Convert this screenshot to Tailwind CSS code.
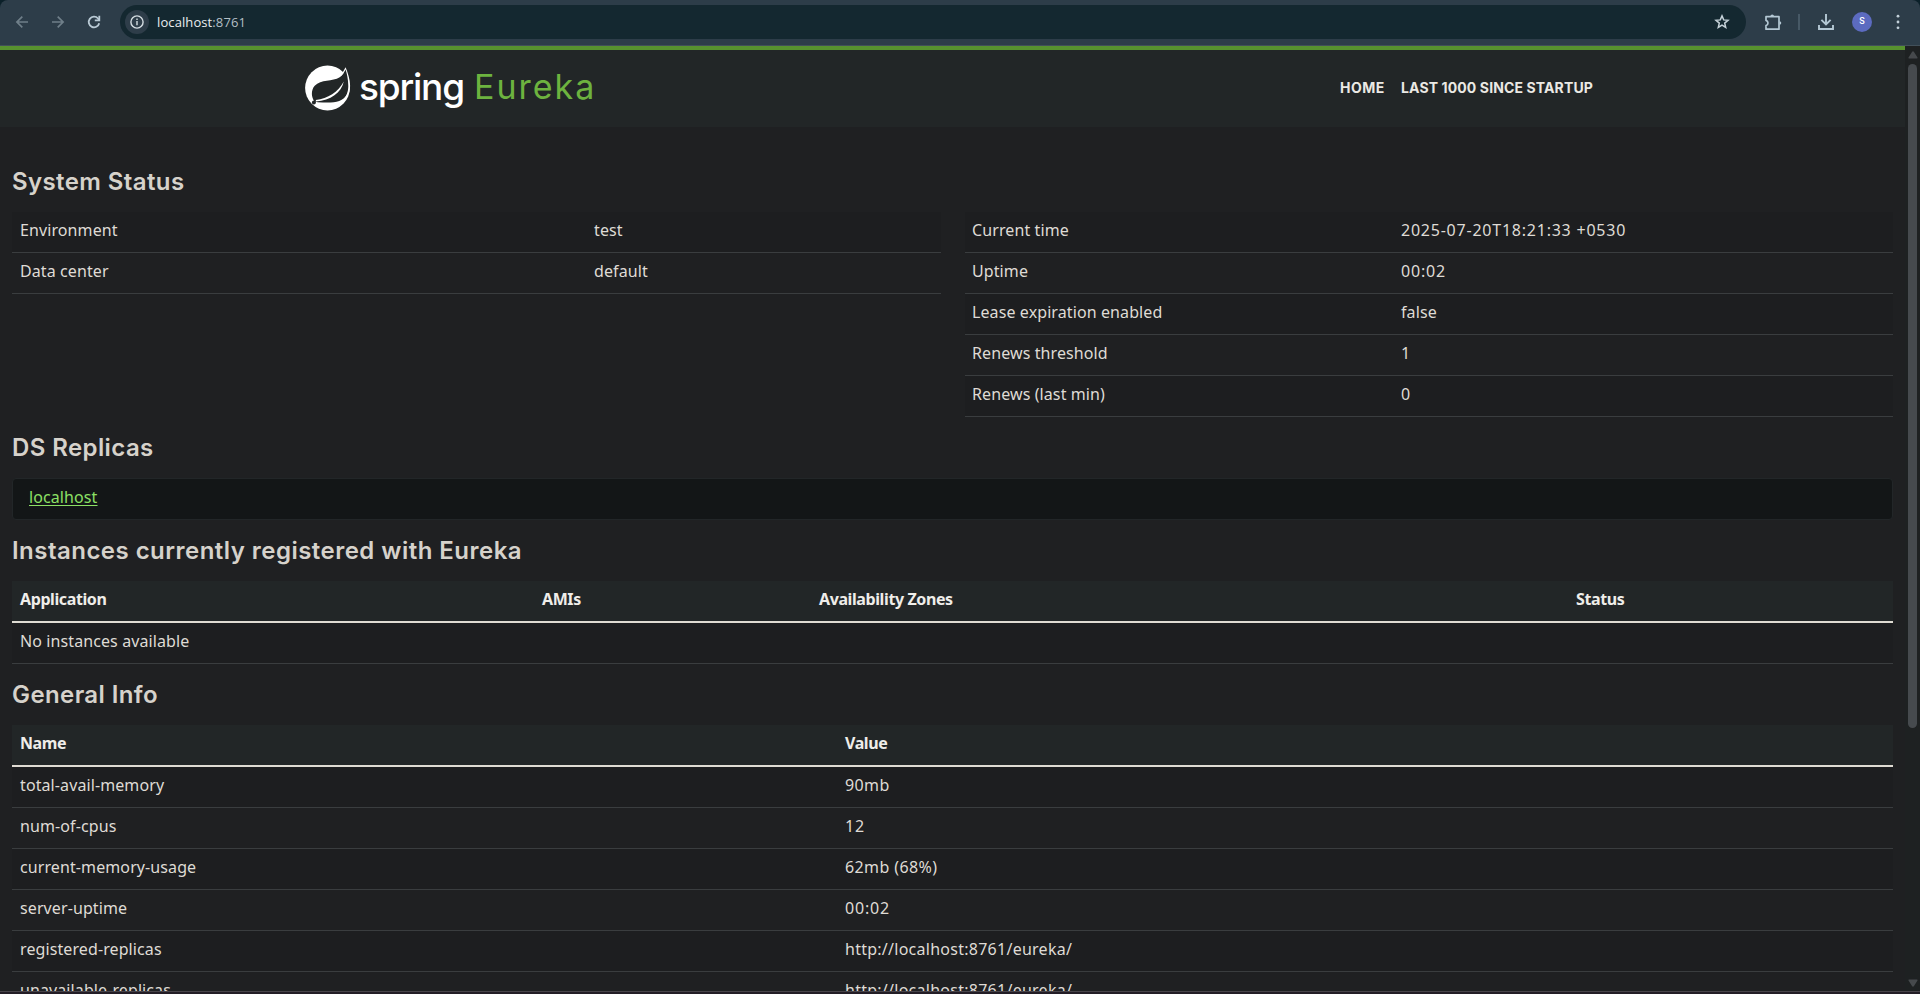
<!DOCTYPE html>
<html lang="en">
<head>
<meta charset="utf-8">
<title>Eureka</title>
<script src="https://cdn.jsdelivr.net/npm/@tailwindcss/browser@4"></script>
</head>
<body class="bg-[#0b2029]">
<div class="flex h-[994px] w-[1920px] flex-col overflow-hidden">

  <!-- Browser toolbar -->
  <header class="flex h-[46px] shrink-0 items-start rounded-t-[8px] border-b border-[#42505a] bg-[#2d3d49] pt-[5px]">
    <div class="ml-[14px] flex h-[34px] items-center gap-[19px]">
      <svg class="h-4 w-4" viewBox="0 0 16 16" fill="none" stroke="#6f7f89" stroke-width="1.7"><path d="M14 8H3M8.3 2.6L2.9 8l5.4 5.4"/></svg>
      <svg class="ml-[1px] h-4 w-4" viewBox="0 0 16 16" fill="none" stroke="#6f7f89" stroke-width="1.7"><path d="M2 8h11M7.7 2.6L13.1 8l-5.4 5.4"/></svg>
      <svg class="ml-[1px] h-4 w-4" viewBox="0 0 16 16" fill="none" stroke="#b9cad5" stroke-width="1.8"><path d="M13.2 9.2A5.3 5.3 0 1 1 12 4.5l1.3 1.5"/><path d="M13.3 1.8v4.5H8.8"/></svg>
    </div>
    <div class="ml-[18px] flex h-[34px] w-[1626px] items-center rounded-full bg-[#142830] pl-[5px] pr-[16px]">
      <div class="flex h-6 w-6 items-center justify-center rounded-full bg-[#2e3d49]">
        <svg class="h-[14px] w-[14px]" viewBox="0 0 14 14" fill="none" stroke="#d5dde2" stroke-width="1.4"><circle cx="7" cy="7" r="6.1"/><path d="M7 6.1v4.2M7 3.6v1.5"/></svg>
      </div>
      <div class="ml-[8px] grow font-['Open_Sans',sans-serif] text-[13px] leading-5 tracking-[0.1px] text-[#e9edef]">localhost<span class="text-[#b3bfc5]">:8761</span></div>
      <svg class="h-4 w-4" viewBox="0 0 16 16" fill="none" stroke="#c6d2d9" stroke-width="1.5" stroke-linejoin="miter"><path d="M8 1.9l1.7 4 4.3.4-3.3 2.8 1 4.3L8 11.1l-3.7 2.3 1-4.3L2 6.3l4.3-.4z"/></svg>
    </div>
    <div class="flex h-[34px] items-center">
      <svg class="ml-[18px] h-[18px] w-[18px]" viewBox="0 0 18 18" fill="none" stroke="#b4c8d4" stroke-width="1.7" stroke-linejoin="round"><path d="M2 3.7h13v12.5H2v-3.6a2.7 2.7 0 0 0 0-5.2z"/><path d="M6.4 3.2a1.8 1.8 0 0 1 3.6 0zM15.5 8.2a1.8 1.8 0 0 1 0 3.6z" fill="#b4c8d4" stroke="none"/></svg>
      <div class="ml-[16px] h-4 w-[2px] bg-[#475966]"></div>
      <svg class="ml-[18px] h-4 w-4" viewBox="0 0 16 16" fill="none" stroke="#b4c8d4" stroke-width="1.9"><path d="M8 0v10M3.4 5.8L8 10.4l4.6-4.6M1 11v4h14v-4"/></svg>
      <div class="ml-[18px] flex h-5 w-5 items-center justify-center rounded-full bg-[#5c6bc0] font-['Roboto',sans-serif] text-[9px] font-medium text-white">S</div>
      <svg class="ml-[18px] h-4 w-4" viewBox="0 0 16 16" fill="#c2d0d9"><circle cx="8" cy="2.2" r="1.4"/><circle cx="8" cy="8" r="1.4"/><circle cx="8" cy="13.8" r="1.4"/></svg>
    </div>
  </header>

  <div class="flex h-[945px] shrink-0 overflow-hidden">
    <!-- Page -->
    <div class="w-[1905px] bg-[#1f2022] font-['Noto_Sans',sans-serif] text-[16px] leading-6 tracking-[0.1px] text-[#dfdbd5]">
      <nav class="flex h-[81px] border-t-4 border-[#57922f] bg-[#222627] pl-[305px] font-['Inter',sans-serif]">
        <svg class="mt-[15px] h-[46px] w-[46px]" viewBox="0 0 46 46">
          <circle cx="22.5" cy="23" r="22.4" fill="#fff"/>
          <path d="M41.3 3.2C39.6 7.3 37.5 10.3 34.7 12.2C27.5 16.8 16 13.8 9.7 20.8C5.6 25.5 6.4 32.6 9.6 36.6L12.8 37.3C26 37.6 37 39 42.5 28.5C45.8 21 43.3 12 41.3 3.2Z" fill="#222627"/>
          <path d="M40.6 2.2C43.8 10 46.6 19.5 44.2 27C42.4 32 39.7 36 36 39.6C40.8 33 43.4 27.5 43.3 21C43.2 14 41.8 8.5 40.6 4.6C40 6 38 9.6 35 12Z" fill="#fff"/>
          <path d="M38.8 16.6C36.4 27.6 25.5 35.8 11 36.4L10.8 35C23 33.6 33 27.5 38.8 16.6Z" fill="#fff"/>
          <circle cx="8.9" cy="37.6" r="2" fill="#222627"/>
        </svg>
        <div class="ml-[8px] mt-[14px] w-[117px] text-[37px] font-medium leading-[46px] tracking-[-1.2px] text-white">spring</div>
        <div class="-ml-[2px] mt-[14px] w-[126px] text-[34px] leading-[46px] tracking-[2px] text-[#6db33f]">Eureka</div>
        <div class="ml-[740px] mt-[28px] flex gap-[16px] text-[14px] font-bold leading-5 text-[#ebe9e4]">
          <a class="w-[45px] whitespace-nowrap tracking-[0.5px]">HOME</a><a class="whitespace-nowrap tracking-[0.12px]">LAST 1000 SINCE STARTUP</a>
        </div>
      </nav>

      <main class="pl-[12px] pr-[12px]">
        <h1 class="h-[85px] pt-[43px] font-['Inter',sans-serif] text-[24px] font-semibold leading-6 tracking-[0.4px] text-[#d6d2cb]">System Status</h1>
        <div class="flex h-[205px] gap-[24px]">
          <div class="w-[929px]">
            <div class="flex h-[41px] border-b border-[#3a3d3f] bg-[#1d1e20] pt-[6px]"><div class="w-[574px] pl-[8px]">Environment</div><div class="pl-[8px]">test</div></div>
            <div class="flex h-[41px] border-b border-[#3a3d3f] pt-[6px]"><div class="w-[574px] pl-[8px]">Data center</div><div class="pl-[8px]">default</div></div>
          </div>
          <div class="w-[928px]">
            <div class="flex h-[41px] border-b border-[#3a3d3f] bg-[#1d1e20] pt-[6px]"><div class="w-[428px] pl-[7px]">Current time</div><div class="pl-[8px] tracking-[0.77px]">2025-07-20T18:21:33 +0530</div></div>
            <div class="flex h-[41px] border-b border-[#3a3d3f] pt-[6px]"><div class="w-[428px] pl-[7px]">Uptime</div><div class="pl-[8px] tracking-[0.8px]">00:02</div></div>
            <div class="flex h-[41px] border-b border-[#3a3d3f] bg-[#1d1e20] pt-[6px]"><div class="w-[428px] pl-[7px]">Lease expiration enabled</div><div class="pl-[8px]">false</div></div>
            <div class="flex h-[41px] border-b border-[#3a3d3f] pt-[6px]"><div class="w-[428px] pl-[7px]">Renews threshold</div><div class="pl-[8px]">1</div></div>
            <div class="flex h-[41px] border-b border-[#3a3d3f] bg-[#1d1e20] pt-[6px]"><div class="w-[428px] pl-[7px]">Renews (last min)</div><div class="pl-[8px]">0</div></div>
          </div>
        </div>

        <h1 class="h-[61px] pt-[19px] font-['Inter',sans-serif] text-[24px] font-semibold leading-6 tracking-[0.4px] text-[#d6d2cb]">DS Replicas</h1>
        <div class="h-[42px] rounded-[4px] border border-[#222628] bg-[#131617] pl-[16px] pt-[6px]"><a class="text-[#8ce065] underline underline-offset-[2px]">localhost</a></div>

        <h1 class="h-[61px] pt-[19px] font-['Inter',sans-serif] text-[24px] font-semibold leading-6 tracking-[0.47px] text-[#d6d2cb]">Instances currently registered with Eureka</h1>
        <div class="flex h-[42px] border-b-2 border-[#dfdbd3] bg-[#222627] pt-[6px] font-bold tracking-[-0.4px] text-[#efede9]">
          <div class="w-[521px] pl-[8px]">Application</div><div class="w-[277px] pl-[9px]">AMIs</div><div class="w-[757px] pl-[9px]">Availability Zones</div><div class="pl-[9px]">Status</div>
        </div>
        <div class="h-[41px] border-b border-[#3a3d3f] bg-[#1d1e20] pl-[8px] pt-[6px]">No instances available</div>

        <h1 class="h-[61px] pt-[19px] font-['Inter',sans-serif] text-[24px] font-semibold leading-6 tracking-[0.4px] text-[#d6d2cb]">General Info</h1>
        <div class="flex h-[42px] border-b-2 border-[#dfdbd3] bg-[#222627] pt-[6px] font-bold tracking-[-0.4px] text-[#efede9]">
          <div class="w-[825px] pl-[8px]">Name</div><div class="pl-[8px]">Value</div>
        </div>
        <div class="flex h-[41px] border-b border-[#3a3d3f] bg-[#1d1e20] pt-[6px]"><div class="w-[825px] pl-[8px]">total-avail-memory</div><div class="pl-[8px] tracking-[0.4px]">90mb</div></div>
        <div class="flex h-[41px] border-b border-[#3a3d3f] pt-[6px]"><div class="w-[825px] pl-[8px]">num-of-cpus</div><div class="pl-[8px] tracking-[0.8px]">12</div></div>
        <div class="flex h-[41px] border-b border-[#3a3d3f] bg-[#1d1e20] pt-[6px]"><div class="w-[825px] pl-[8px]">current-memory-usage</div><div class="pl-[8px] tracking-[0.4px]">62mb (68%)</div></div>
        <div class="flex h-[41px] border-b border-[#3a3d3f] pt-[6px]"><div class="w-[825px] pl-[8px]">server-uptime</div><div class="pl-[8px] tracking-[0.8px]">00:02</div></div>
        <div class="flex h-[41px] border-b border-[#3a3d3f] bg-[#1d1e20] pt-[6px]"><div class="w-[825px] pl-[8px]">registered-replicas</div><div class="pl-[8px] tracking-[0.26px]">http://localhost:8761/eureka/</div></div>
        <div class="flex h-[41px] border-b border-[#3a3d3f] pt-[6px]"><div class="w-[825px] pl-[8px]">unavailable-replicas</div><div class="pl-[8px] tracking-[0.26px]">http://localhost:8761/eureka/</div></div>
      </main>
    </div>

    <!-- Scrollbar -->
    <div class="flex w-[15px] flex-col items-center bg-[#1e2122] pt-[5px]">
      <svg class="h-[8px] w-[10px]" viewBox="0 0 10 8" fill="#46494c"><path d="M5 0.3Q5.6 0.3 6 1L9.5 6.5Q9.8 7.5 9 7.5H1Q0.2 7.5 0.5 6.5L4 1Q4.4 0.3 5 0.3Z"/></svg>
      <div class="mt-[5px] h-[664px] w-[9px] rounded-full bg-[#464a4e]"></div>
      <svg class="mb-[4px] mt-auto h-[8px] w-[10px]" viewBox="0 0 10 8" fill="#46494c"><path d="M5 7.7Q4.4 7.7 4 7L0.5 1.5Q0.2 0.5 1 0.5H9Q9.8 0.5 9.5 1.5L6 7Q5.6 7.7 5 7.7Z"/></svg>
    </div>
  </div>
  <div class="h-[3px] shrink-0 border-t border-[#48444a] bg-[#231d26]"></div>
</div>
</body>
</html>
